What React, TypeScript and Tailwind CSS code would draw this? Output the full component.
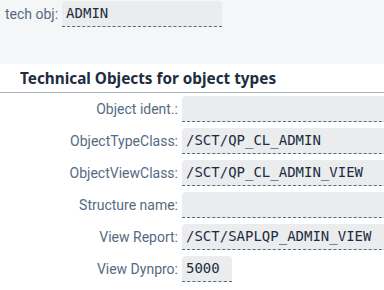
import React from "react";

const rows: { label: string; value: string; w: string }[] = [
  { label: "Object ident.:", value: "", w: "w-[220px]" },
  { label: "ObjectTypeClass:", value: "/SCT/QP_CL_ADMIN", w: "w-[220px]" },
  { label: "ObjectViewClass:", value: "/SCT/QP_CL_ADMIN_VIEW", w: "w-[220px]" },
  { label: "Structure name:", value: "", w: "w-[220px]" },
  { label: "View Report:", value: "/SCT/SAPLQP_ADMIN_VIEW", w: "w-[220px]" },
  { label: "View Dynpro:", value: "5000", w: "w-[50px]" },
];

function Field({ value, className }: { value: string; className: string }) {
  return (
    <div
      className={`${className} h-[26px] shrink-0 rounded-t-[4px] bg-[#eaecee] border-b border-dashed border-[#556b82] pl-[4px] flex items-center text-[14px] text-[#1d2d3e] whitespace-nowrap`}
      style={{ fontFamily: '"DejaVu Sans Mono", monospace' }}
    >
      {value}
    </div>
  );
}

export default function App() {
  return (
    <div
      className="w-[384px] h-[290px] overflow-hidden bg-white"
      style={{ fontFamily: 'Roboto, "Liberation Sans", sans-serif' }}
    >
      <div className="h-[64px] bg-[#f5f6f7] pl-[5px] pt-[1px]">
        <div className="flex items-center gap-[4px]">
          <span className="text-[14px] text-[#556b82]">tech obj:</span>
          <Field value="ADMIN" className="w-[160px]" />
        </div>
      </div>
      <div className="h-[29px] pl-[20px] flex items-center border-b border-[#a9b4be]">
        <span
          className="text-[15.3px] font-bold text-[#1d2d3e]"
          style={{ fontFamily: '"Noto Sans", sans-serif' }}
        >
          Technical Objects for object types
        </span>
      </div>
      <div className="pt-[3px] flex flex-col gap-[6px]">
        {rows.map((r) => (
          <div key={r.label} className="flex items-center gap-[4px]">
            <span className="w-[178px] shrink-0 text-right text-[14px] text-[#556b82]">
              {r.label}
            </span>
            <Field value={r.value} className={r.w} />
          </div>
        ))}
      </div>
    </div>
  );
}
